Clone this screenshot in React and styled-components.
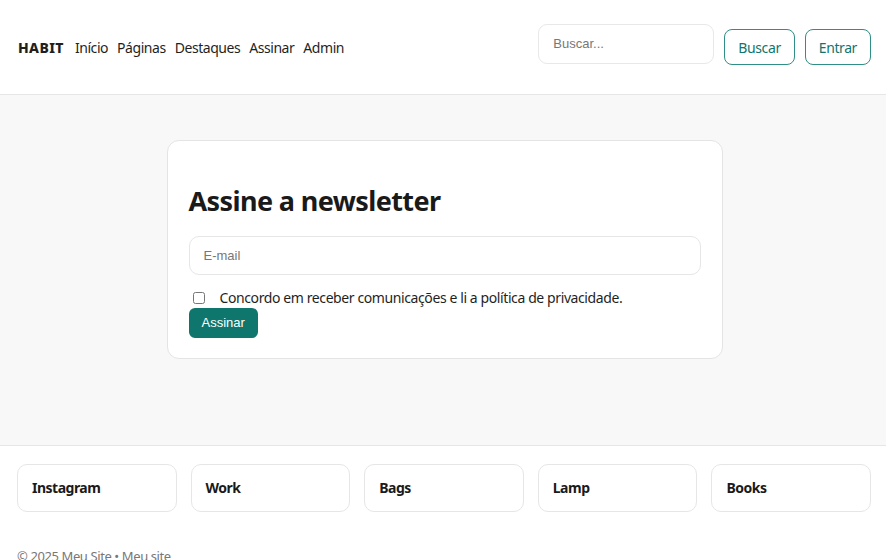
import styled, { createGlobalStyle } from 'styled-components';

const GlobalStyle = createGlobalStyle`
    * { box-sizing: border-box; }
    body {
        margin: 0;
        font-family: "Noto Sans", "Open Sans", sans-serif;
        color: #1f1f1f;
        background: #ffffff;
    }
`;

const Header = styled.header`
    display: flex;
    align-items: center;
    justify-content: space-between;
    height: 95px;
    padding: 0 15px 0 18px;
    background: #ffffff;
    border-bottom: 1px solid #e6e6e6;
`;

const Nav = styled.nav`
    display: flex;
    align-items: center;
    gap: 9px;
    font-size: 14px;
    letter-spacing: -0.45px;
`;

const Brand = styled.span`
    font-weight: 800;
    letter-spacing: 0.4px;
    margin-right: 2px;
`;

const NavLink = styled.a`
    color: #1f1f1f;
    text-decoration: none;
`;

const Actions = styled.div`
    display: flex;
    align-items: center;
    gap: 10px;
`;

const SearchInput = styled.input`
    width: 176px;
    height: 40px;
    padding: 0 14px;
    margin-top: -7px;
    border: 1px solid #e8e8e8;
    border-radius: 9px;
    font-family: "Liberation Sans", Arial, sans-serif;
    font-size: 13px;
    outline: none;
    &::placeholder { color: #777; }
`;

const OutlineButton = styled.button`
    height: 36px;
    padding: 0 13px;
    background: #ffffff;
    color: #0f766e;
    border: 1px solid #2f8e85;
    border-radius: 8px;
    font-family: inherit;
    font-size: 14px;
    letter-spacing: -0.4px;
    cursor: pointer;
`;

const Main = styled.main`
    display: flex;
    justify-content: center;
    padding: 45px 16px 86px 19px;
    background: #f8f8f8;
    border-bottom: 1px solid #e6e6e6;
`;

const Card = styled.section`
    width: 556px;
    padding: 23px 21px 20px;
    background: #ffffff;
    border: 1px solid #e4e4e4;
    border-radius: 12px;
`;

const Title = styled.h2`
    margin: 20px 0 18px;
    font-size: 27px;
    font-weight: 700;
    line-height: 1.25;
    letter-spacing: -0.6px;
    color: #1a1a1a;
`;

const EmailInput = styled.input`
    display: block;
    width: 100%;
    height: 39px;
    padding: 0 14px;
    border: 1px solid #e6e6e6;
    border-radius: 10px;
    font-family: "Liberation Sans", Arial, sans-serif;
    font-size: 13px;
    outline: none;
    &::placeholder { color: #777; }
`;

const Consent = styled.label`
    display: flex;
    align-items: center;
    gap: 15px;
    margin-top: 13px;
    height: 20px;
    font-size: 14px;
    letter-spacing: -0.4px;
    color: #1f1f1f;

    input { margin: 0 0 0 4px; width: 12px; height: 12px; }
`;

const PrimaryButton = styled.button`
    height: 30px;
    padding: 0 13px;
    background: #0f766e;
    color: #ffffff;
    border: none;
    border-radius: 6px;
    font-family: "Liberation Sans", Arial, sans-serif;
    font-size: 13px;
    cursor: pointer;
`;

const Footer = styled.footer`
    padding: 18px 15px 0 17px;
    background: #ffffff;
`;

const LinkGrid = styled.div`
    display: grid;
    grid-template-columns: repeat(5, 1fr);
    gap: 14px;
`;

const LinkCard = styled.a`
    display: flex;
    align-items: center;
    height: 48px;
    padding: 0 14px;
    border: 1px solid #e6e6e6;
    border-radius: 10px;
    font-size: 14px;
    font-weight: 700;
    letter-spacing: -0.5px;
    color: #1a1a1a;
    text-decoration: none;
`;

const Copyright = styled.p`
    margin: 35px 0 0;
    font-size: 13px;
    letter-spacing: -0.4px;
    color: #777;
`;

const links = ['Instagram', 'Work', 'Bags', 'Lamp', 'Books'];

export default function App() {
    return (
        <>
            <GlobalStyle />
            <Header>
                <Nav>
                    <Brand>HABIT</Brand>
                    <NavLink href="#">Início</NavLink>
                    <NavLink href="#">Páginas</NavLink>
                    <NavLink href="#">Destaques</NavLink>
                    <NavLink href="#">Assinar</NavLink>
                    <NavLink href="#">Admin</NavLink>
                </Nav>
                <Actions>
                    <SearchInput placeholder="Buscar..." />
                    <OutlineButton>Buscar</OutlineButton>
                    <OutlineButton>Entrar</OutlineButton>
                </Actions>
            </Header>

            <Main>
                <Card>
                    <Title>Assine a newsletter</Title>
                    <EmailInput placeholder="E-mail" />
                    <Consent>
                        <input type="checkbox" />
                        Concordo em receber comunicações e li a política de privacidade.
                    </Consent>
                    <PrimaryButton>Assinar</PrimaryButton>
                </Card>
            </Main>

            <Footer>
                <LinkGrid>
                    {links.map(link => (
                        <LinkCard key={link} href="#">{link}</LinkCard>
                    ))}
                </LinkGrid>
                <Copyright>© 2025 Meu Site • Meu site</Copyright>
            </Footer>
        </>
    );
}
